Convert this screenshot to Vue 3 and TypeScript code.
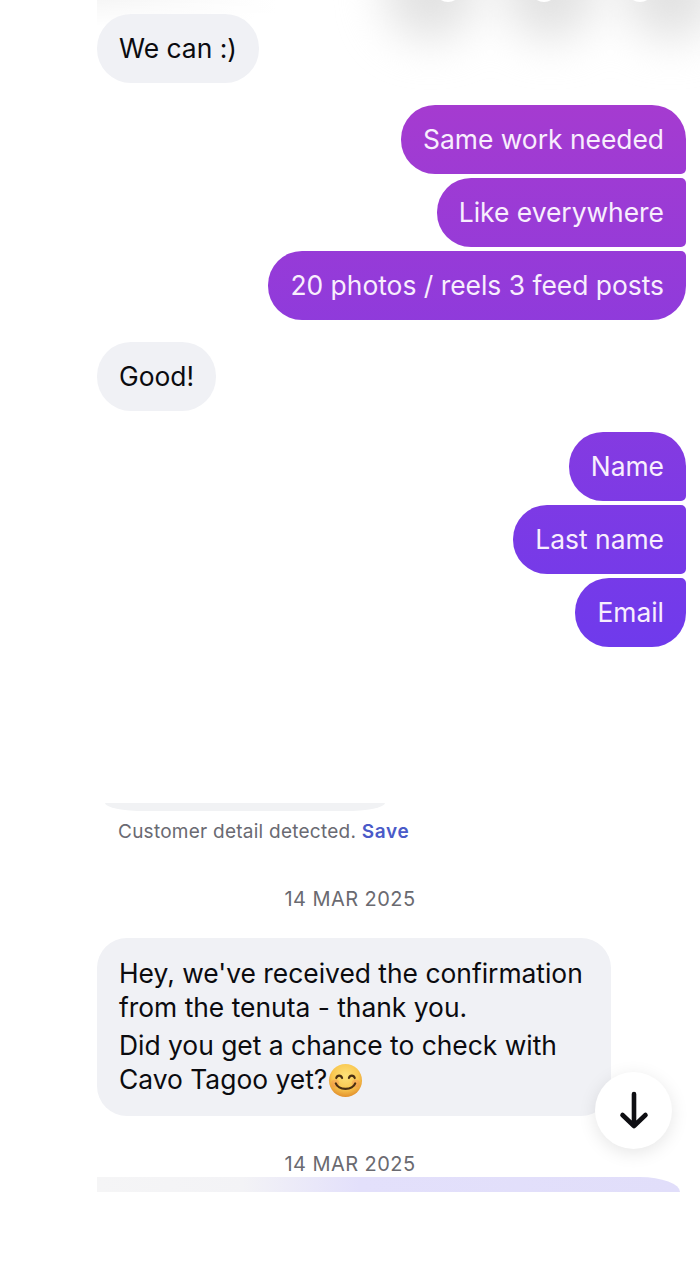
<template>
  <div class="screen">
    <div class="top-fade"></div>
    <div class="top-shade">
      <span v-for="n in 3" :key="n" class="blob"></span>
    </div>
    <div class="reactions">
      <span v-for="n in 3" :key="n" class="reaction"></span>
    </div>
    <div class="thread">
      <div class="msg in first">We can :)</div>

      <div class="group">
        <div class="msg out top">Same work needed</div>
        <div class="msg out mid">Like everywhere</div>
        <div class="msg out end">20 photos / reels 3 feed posts</div>
      </div>

      <div class="msg in good">Good!</div>

      <div class="group second">
        <div class="msg out top">Name</div>
        <div class="msg out mid">Last name</div>
        <div class="msg out end">Email</div>
      </div>

      <div class="clipped-bubble"></div>
      <p class="detected">Customer detail detected. <span class="save">Save</span></p>

      <p class="date first-date">{{ date }}</p>

      <div class="msg in long">
        <p>Hey, we've received the confirmation<br>from the tenuta - thank you.</p>
        <p class="next">Did you get a chance to check with<br>Cavo Tagoo yet?<svg class="emoji" viewBox="0 0 36 36">
            <defs>
              <radialGradient id="face" cx="50%" cy="36%" r="64%">
                <stop offset="0%" stop-color="#fde27a" />
                <stop offset="62%" stop-color="#f9c851" />
                <stop offset="100%" stop-color="#e2902c" />
              </radialGradient>
            </defs>
            <circle cx="18" cy="18" r="17" fill="url(#face)" />
            <circle cx="7.500" cy="21" r="4" fill="#f3804f" opacity="0.35" />
            <circle cx="28.500" cy="21" r="4" fill="#f3804f" opacity="0.35" />
            <path d="M8.500 15.500c1-3.400 5-3.400 6 0M21.500 15.500c1-3.400 5-3.400 6 0" fill="none" stroke="#4a2f12" stroke-width="2.200" stroke-linecap="round" />
            <path d="M8 21c3 7.500 17 7.500 20 0" fill="none" stroke="#4a2f12" stroke-width="2.200" stroke-linecap="round" />
          </svg></p>
      </div>

      <p class="date second-date">{{ date }}</p>

      <div class="clipped-purple"></div>
    </div>

    <button class="scroll-down">
      <svg viewBox="0 0 32 40" width="32" height="40">
        <path d="M16 3v32M4.500 24 16 35l11.500-11" fill="none" stroke="#0e0e12" stroke-width="4.600" stroke-linecap="round" stroke-linejoin="round" />
      </svg>
    </button>
  </div>
</template>

<script setup lang="ts">
const date = '14 MAR 2025'
</script>

<style>
body {
  background: #fff;
}
</style>

<style scoped>
.screen {
  position: relative;
  width: 700px;
  height: 1280px;
  overflow: hidden;
  background: #fff;
  font-family: Inter, "Liberation Sans", sans-serif;
}

/* faint shade left over from the header */
.top-fade {
  position: absolute;
  left: 97px;
  top: 0;
  width: 180px;
  height: 26px;
  background: linear-gradient(90deg, #f6f6f6, #fff);
  -webkit-mask-image: linear-gradient(180deg, #000, transparent);
  mask-image: linear-gradient(180deg, #000, transparent);
}

.top-shade {
  position: absolute;
  left: 370px;
  top: -60px;
  width: 360px;
  height: 100px;
  display: flex;
  justify-content: space-around;
  filter: blur(22px);
}

.blob {
  width: 95px;
  height: 100px;
  border-radius: 50%;
  background: #e2e2e2;
}

.reactions {
  position: absolute;
  left: 438px;
  top: -12px;
  width: 212px;
  display: flex;
  justify-content: space-between;
  filter: blur(0.6px);
}

.reaction {
  width: 20px;
  height: 14px;
  border-radius: 50%;
  background: #fff;
}

.thread {
  position: relative;
  display: flex;
  flex-direction: column;
  padding: 14px 14px 0 97px;
}

.group {
  display: flex;
  flex-direction: column;
  align-items: flex-end;
  gap: 4px;
  margin-top: 22px;
}

.group.second {
  margin-top: 21px;
}

.msg {
  box-sizing: border-box;
  min-height: 69px;
  padding: 16.5px 22px 17.5px;
  font-size: 26.4px;
  font-weight: 380;
  line-height: 35px;
  white-space: nowrap;
}

.in {
  align-self: flex-start;
  border-radius: 34px;
  background: #f0f1f5;
  color: #0b0b0f;
}

.good {
  margin-top: 22px;
}

.out {
  color: #f8eefd;
  background: linear-gradient(180deg, #a53bd0 105px, #6f3aec 647px) fixed;
}

.top {
  border-radius: 34px 34px 5px 34px;
}

.mid {
  border-radius: 34px 5px 5px 34px;
}

.end {
  border-radius: 34px 5px 34px 34px;
}

.clipped-bubble {
  width: 280px;
  height: 8px;
  margin: 156px 0 0 8px;
  border-radius: 0 0 40px 40px / 0 0 8px 8px;
  background: #f1f2f4;
}

.detected {
  margin: 10px 0 0 21px;
  font-size: 19px;
  line-height: 22px;
  letter-spacing: 0.25px;
  color: #6a6a72;
}

.save {
  font-weight: 600;
  letter-spacing: 0.7px;
  color: #4a5ac8;
}

.date {
  margin: 0 -14px 0 -97px;
  text-align: center;
  font-size: 20px;
  line-height: 24px;
  letter-spacing: 0.45px;
  color: #6a6a70;
}

.first-date {
  margin-top: 44px;
}

.second-date {
  margin-top: 36px;
}

.long {
  width: 514px;
  height: 178px;
  margin-top: 27px;
  padding: 18px 22px 0;
  border-radius: 30px;
  line-height: 34px;
  background: #f0f1f5;
}

.long p {
  margin: 0;
}

.long .next {
  margin-top: 4px;
}

.emoji {
  width: 35px;
  height: 35px;
  margin: -4px 0 -4px 1px;
  vertical-align: -5px;
}

.clipped-purple {
  width: 583px;
  height: 15px;
  margin-top: 1px;
  border-radius: 0 40px 0 0 / 0 15px 0 0;
  background: linear-gradient(90deg, #f5f5f6 0%, #f3f3f6 25%, #e3e0fb 45%, #e1defa 100%);
}

.scroll-down {
  position: absolute;
  left: 595px;
  top: 1072px;
  width: 77px;
  height: 77px;
  padding: 0;
  display: flex;
  align-items: center;
  justify-content: center;
  border: none;
  border-radius: 50%;
  background: #fff;
  box-shadow: 0 4px 18px rgba(0, 0, 0, 0.1);
}
</style>
